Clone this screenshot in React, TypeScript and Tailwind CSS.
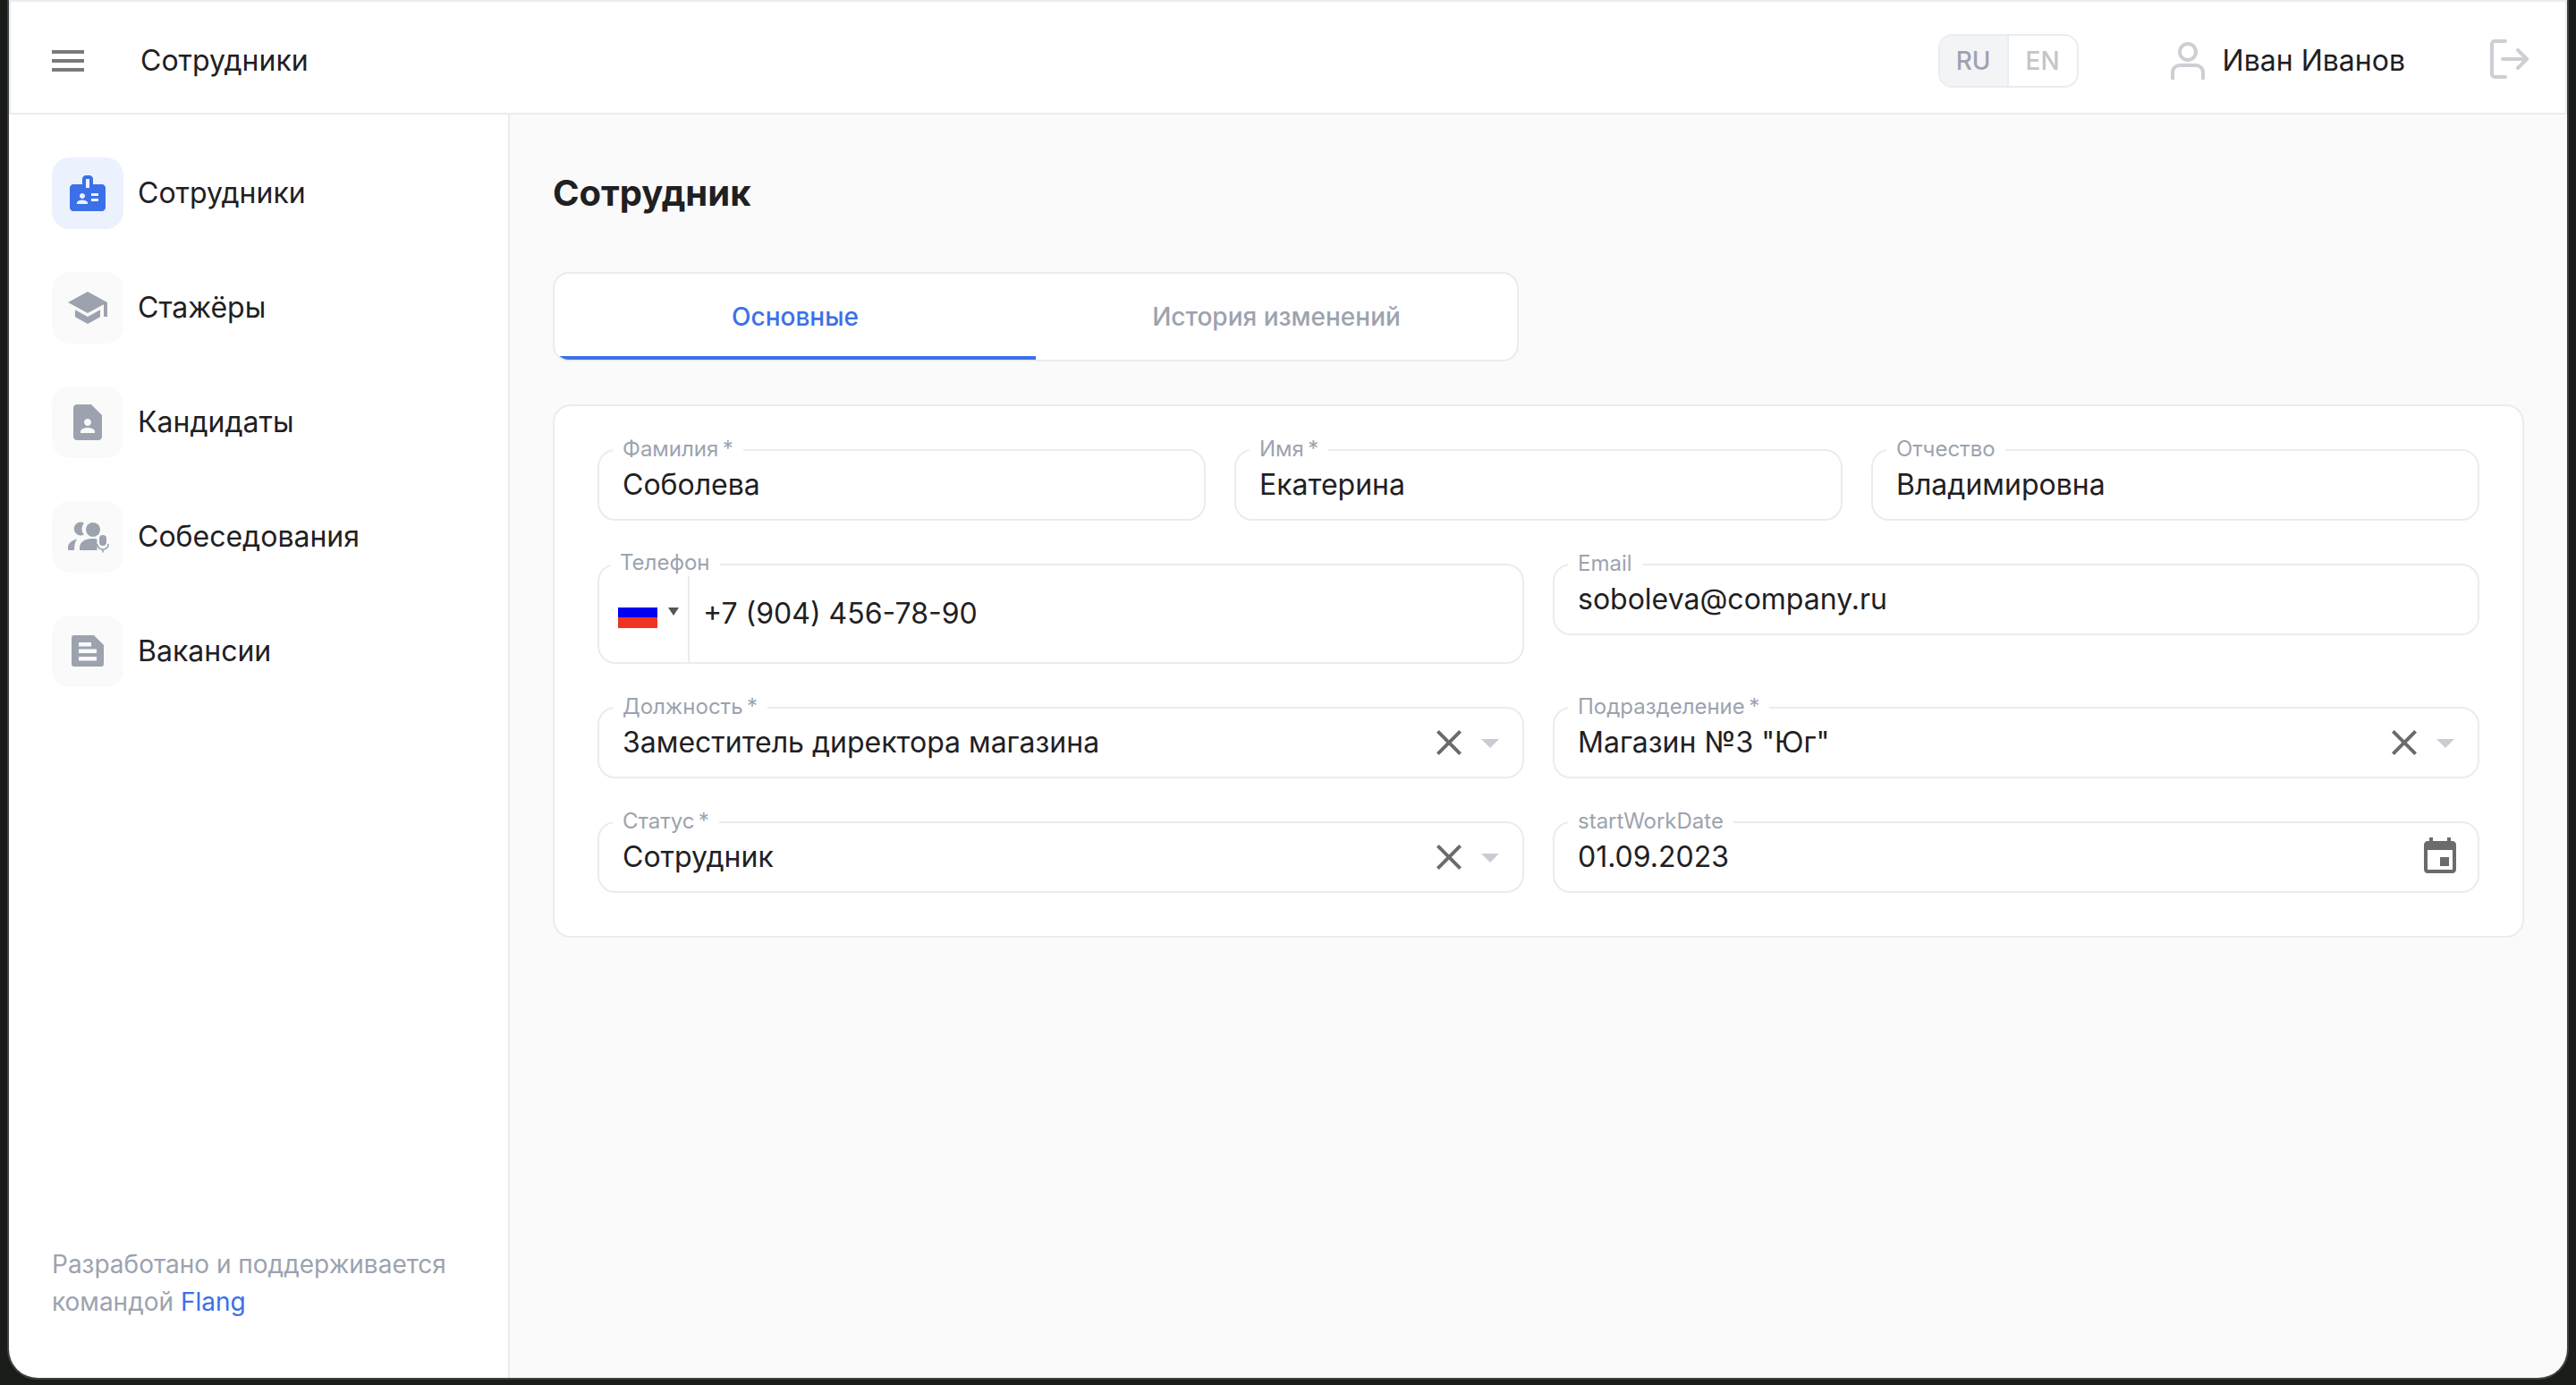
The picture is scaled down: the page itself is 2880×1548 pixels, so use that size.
import type { ReactNode } from 'react';

const INTER = "font-['Inter','Noto_Sans',sans-serif]";

function MuiIcon({ d, className }: { d: string; className?: string }) {
  return (
    <svg viewBox="0 0 24 24" className={`h-12 w-12 fill-current ${className ?? ''}`}>
      <path d={d} />
    </svg>
  );
}

const ICONS = {
  badge:
    'M20 7h-5V4c0-1.1-.9-2-2-2h-2c-1.1 0-2 .9-2 2v3H4c-1.1 0-2 .9-2 2v11c0 1.1.9 2 2 2h16c1.1 0 2-.9 2-2V9c0-1.1-.9-2-2-2zM9 12c.83 0 1.5.67 1.5 1.5S9.83 15 9 15s-1.5-.67-1.5-1.5S8.17 12 9 12zm3 6H6v-.75c0-1 2-1.5 3-1.5s3 .5 3 1.5V18zm1-9h-2V4h2v5zm5 7.5h-4V15h4v1.5zm0-3h-4V12h4v1.5z',
  school: 'M5 13.18v4L12 21l7-3.82v-4L12 17l-7-3.82zM12 3 1 9l11 6 9-4.91V17h2V9L12 3z',
  contact:
    'M14 2H6c-1.1 0-2 .9-2 2v16c0 1.1.9 2 2 2h12c1.1 0 2-.9 2-2V8l-6-6zm-2 8c1.1 0 2 .9 2 2s-.9 2-2 2-2-.9-2-2 .9-2 2-2zm4 8H8v-.57c0-.81.48-1.53 1.22-1.85.85-.37 1.79-.58 2.78-.58.99 0 1.93.21 2.78.58.74.32 1.22 1.04 1.22 1.85V18z',
  close:
    'M19 6.41L17.59 5 12 10.59 6.41 5 5 6.41 10.59 12 5 17.59 6.41 19 12 13.41 17.59 19 19 17.59 13.41 12z',
  arrow: 'm7 10 5 5 5-5z',
  event:
    'M17 12h-5v5h5v-5zM16 1v2H8V1H6v2H5c-1.11 0-1.99.9-1.99 2L3 19c0 1.1.89 2 2 2h14c1.1 0 2-.9 2-2V5c0-1.1-.9-2-2-2h-1V1h-2zm3 18H5V8h14v11z',
};

function InterviewIcon() {
  return (
    <svg viewBox="0 0 48 48" className="h-12 w-12 text-[#9ca3af]" fill="currentColor">
      <path d="M20 8.5A7.5 7.5 0 1 0 20 21.5a9.5 9.5 0 0 1 0-13z" />
      <circle cx="30" cy="16" r="8" />
      <path d="M2 39v-3c0-4 3-7.5 10-9.5-2 3-3 7-3 12.5z" />
      <path d="M15 39v-3c0-6 6-10 14-10 4 0 7 .6 9 1.5V39z" />
      <rect x="34.5" y="22" width="14" height="20" fill="#fafafa" />
      <rect x="37" y="22" width="8" height="12" rx="4" />
      <path d="M34.8 32a6.2 6.2 0 0 0 12.4 0M41 38v3.5" fill="none" stroke="currentColor" strokeWidth="1.6" />
    </svg>
  );
}

function DocIcon() {
  return (
    <svg viewBox="0 0 48 48" className="h-12 w-12 text-[#9ca3af]">
      <path d="M9 6h22l11 11v21a3 3 0 0 1-3 3H9a3 3 0 0 1-3-3V9a3 3 0 0 1 3-3z" fill="currentColor" />
      <rect x="14" y="14" width="14" height="4.5" fill="#fafafa" />
      <rect x="14" y="21.5" width="20" height="4.5" fill="#fafafa" />
      <rect x="14" y="30" width="20" height="4.5" fill="#fafafa" />
    </svg>
  );
}

function UserIcon() {
  return (
    <svg viewBox="0 0 40 44" className="h-11 w-10 text-[#cdcfd4]" fill="none" stroke="currentColor" strokeWidth="4">
      <circle cx="20" cy="12" r="9" />
      <path d="M3 43v-8c0-5 4-8 8-8h18c4 0 8 3 8 8v8" />
    </svg>
  );
}

function LogoutIcon() {
  return (
    <svg viewBox="0 0 44 48" className="h-12 w-11 text-[#cdcfd4]" fill="none" stroke="currentColor" strokeWidth="4" strokeLinecap="round" strokeLinejoin="round">
      <path d="M18 4H6a3 3 0 0 0-3 3v34a3 3 0 0 0 3 3h12" />
      <path d="M15 24h26M32 14l10 10-10 10" />
    </svg>
  );
}

function NavItem({ icon, label, active }: { icon: ReactNode; label: string; active?: boolean }) {
  return (
    <div className="flex items-center gap-4">
      <div
        className={`flex h-20 w-20 items-center justify-center rounded-[20px] ${
          active ? 'bg-[#ebf1fd] text-[#3b70e8]' : 'bg-[#fafafa] text-[#9ca3af]'
        }`}
      >
        {icon}
      </div>
      <span className="text-[32px] text-[#1f2023]">{label}</span>
    </div>
  );
}

function Field({
  label,
  required,
  children,
  className,
  labelClassName,
}: {
  label: string;
  required?: boolean;
  children: ReactNode;
  className?: string;
  labelClassName?: string;
}) {
  return (
    <div className={`relative flex h-20 items-center rounded-[20px] border-2 border-[#e9ecf0] pl-[26px] pr-3 ${className ?? ''}`}>
      <span className={`absolute bg-white px-[11px] text-[24px] leading-[26px] text-[#9ca3af] ${labelClassName ?? '-top-[15px] left-[15px]'}`}>
        {label}
        {required && '\u2009*'}
      </span>
      {children}
    </div>
  );
}

function Value({ children }: { children: ReactNode }) {
  return <span className="grow text-[32px] text-[#1f2023]">{children}</span>;
}

function SelectField({ label, value }: { label: string; value: string }) {
  return (
    <Field label={label} required>
      <Value>{value}</Value>
      <MuiIcon d={ICONS.close} className="text-[#6b6b6b]" />
      <MuiIcon d={ICONS.arrow} className="-ml-[2px] text-[#c9ccd2]" />
    </Field>
  );
}

export default function App() {
  return (
    <div className={`flex h-[1548px] w-[2880px] flex-col bg-[#1a1c1a] pb-[6px] pl-2 pr-2 ${INTER}`}>
      <div className="flex min-h-0 grow flex-col overflow-hidden rounded-b-[34px] border-x-2 border-b-2 border-[#3f403f]">
        {/* Header */}
        <header className="flex h-[128px] shrink-0 items-center border-2 border-[#e9ecf0] bg-white pl-[46px] pt-2">
          <svg viewBox="0 0 36 24" className="h-6 w-9 text-[#7a7a7a]" fill="currentColor">
            <rect width="36" height="4" />
            <rect y="10" width="36" height="4" />
            <rect y="20" width="36" height="4" />
          </svg>
          <span className="ml-[63px] text-[32px] text-[#1f2023]">Сотрудники</span>
          <div className="ml-auto flex h-[60px] w-[157px] overflow-hidden rounded-[16px] border-2 border-[#e9ecf0] text-[28px] font-medium">
            <div className="flex w-[77px] items-center justify-center border-r-2 border-[#e9ecf0] bg-[#f3f4f6] text-[#9ca3af]">RU</div>
            <div className="flex grow items-center justify-center text-[#c4c5c9]">EN</div>
          </div>
          <div className="ml-[102px] flex items-center gap-[19px]">
            <UserIcon />
            <span className="text-[32px] text-[#1f2023]">Иван Иванов</span>
          </div>
          <div className="-mt-1 ml-[94px] mr-[41px]">
            <LogoutIcon />
          </div>
        </header>

        <div className="flex min-h-0 grow">
          {/* Sidebar */}
          <aside className="flex w-[560px] shrink-0 flex-col justify-between border-r-2 border-[#e9ecf0] bg-white pb-[64px] pl-12 pt-12">
            <nav className="flex flex-col gap-12">
              <NavItem active label="Сотрудники" icon={<MuiIcon d={ICONS.badge} />} />
              <NavItem label="Стажёры" icon={<MuiIcon d={ICONS.school} />} />
              <NavItem label="Кандидаты" icon={<MuiIcon d={ICONS.contact} />} />
              <NavItem label="Собеседования" icon={<InterviewIcon />} />
              <NavItem label="Вакансии" icon={<DocIcon />} />
            </nav>
            <p className="text-[28px] leading-[42px] text-[#9ca3af]">
              Разработано и поддерживается
              <br />
              командой <span className="text-[#3b70e8]">Flang</span>
            </p>
          </aside>

          {/* Content */}
          <main className="min-w-0 grow bg-[#fafafa] px-12 pt-[63px]">
            <h1 className="text-[40px] font-bold leading-[50px] text-[#1f2023]">Сотрудник</h1>

            <div className="mt-[63px] flex h-[100px] w-[1080px] overflow-hidden rounded-[18px] border-2 border-[#e9ecf0] bg-white text-[28px] font-medium">
              <div className="flex w-1/2 items-center justify-center border-b-4 border-[#3b70e8] pt-1 text-[#3b70e8]">Основные</div>
              <div className="flex w-1/2 items-center justify-center text-[#9ca3af]">История изменений</div>
            </div>

            <div className="mt-12 flex flex-col gap-12 rounded-[20px] border-2 border-[#e9ecf0] bg-white p-12">
              <div className="grid grid-cols-3 gap-8">
                <Field label="Фамилия" required><Value>Соболева</Value></Field>
                <Field label="Имя" required><Value>Екатерина</Value></Field>
                <Field label="Отчество"><Value>Владимировна</Value></Field>
              </div>

              <div className="grid grid-cols-2 items-start gap-8">
                <Field label="Телефон" className="h-[112px] !pl-0" labelClassName="-top-[16px] left-[12px]">
                  <div className="flex h-[96px] w-[101px] shrink-0 items-center self-end border-r-2 border-[#e9ecf0] pl-[21px]">
                    <div className="-mt-[15px] flex h-[35px] w-[44px] flex-col">
                      <div className="grow bg-white" />
                      <div className="grow bg-[#0000f0]" />
                      <div className="grow bg-[#ee3524]" />
                    </div>
                    <div className="-mt-[17px] ml-3 h-0 w-0 border-x-[6px] border-t-[9px] border-x-transparent border-t-[#555555]" />
                  </div>
                  <span className="ml-[15px] text-[32px] text-[#1f2023]">+7 (904) 456-78-90</span>
                </Field>
                <Field label="Email"><Value>soboleva@company.ru</Value></Field>
              </div>

              <div className="grid grid-cols-2 gap-8">
                <SelectField label="Должность" value="Заместитель директора магазина" />
                <SelectField label="Подразделение" value={'Магазин №3 "Юг"'} />
              </div>

              <div className="grid grid-cols-2 gap-8">
                <SelectField label="Статус" value="Сотрудник" />
                <Field label="startWorkDate">
                  <Value>01.09.2023</Value>
                  <MuiIcon d={ICONS.event} className="mr-[6px] text-[#6b6b6b]" />
                </Field>
              </div>
            </div>
          </main>
        </div>
      </div>
    </div>
  );
}
